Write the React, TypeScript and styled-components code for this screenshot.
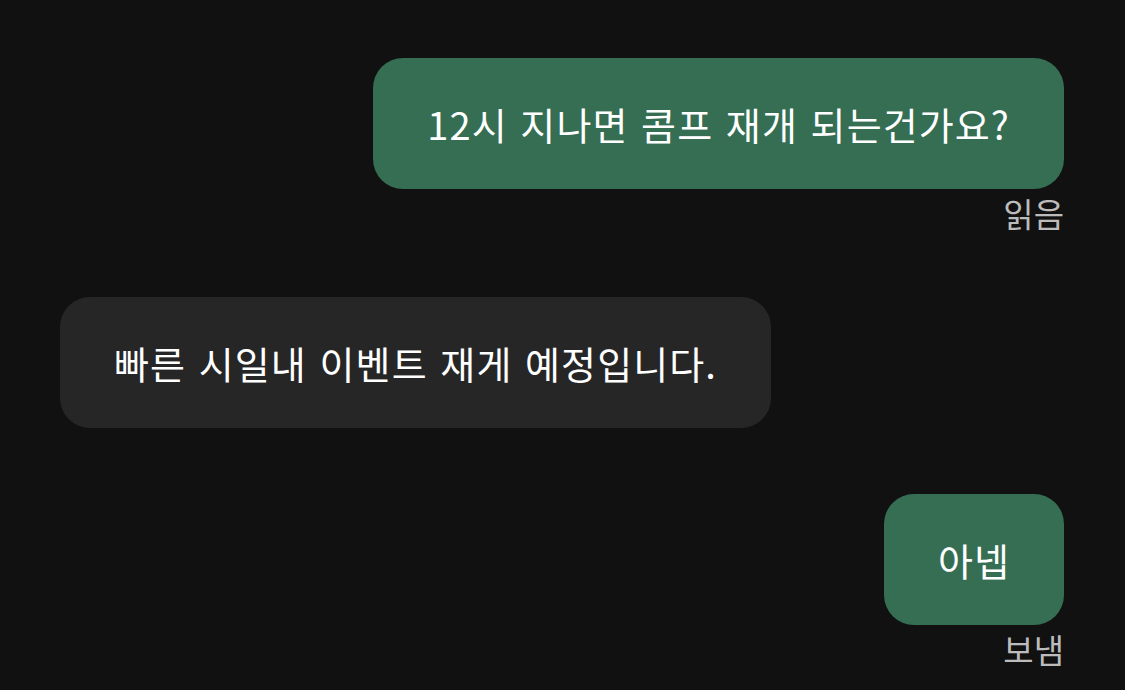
import styled, { createGlobalStyle } from 'styled-components'
import { ReactElement } from 'react'

const GlobalStyle = createGlobalStyle`
  html, body {
    margin: 0;
    padding: 0;
    background: #111111;
  }
  body {
    font-family: "Noto Sans CJK KR", "Noto Sans", sans-serif;
  }
`

const Chat = styled.div`
  width: 1125px;
  height: 690px;
  box-sizing: border-box;
  padding: 58px 61px 0 60px;
  display: flex;
  flex-direction: column;
  overflow: hidden;
`

const Row = styled.div<{ $mine: boolean; $gap: number }>`
  display: flex;
  flex-direction: column;
  align-items: ${(p) => (p.$mine ? 'flex-end' : 'flex-start')};
  margin-bottom: ${(p) => p.$gap}px;
`

const Bubble = styled.div<{ $mine: boolean }>`
  background: ${(p) => (p.$mine ? '#356e53' : '#262626')};
  color: #ffffff;
  border-radius: 30px;
  padding: 0 54px;
  height: 131px;
  display: flex;
  align-items: center;
  font-size: 38px;
  letter-spacing: 1.1px;
  word-spacing: 3px;
  white-space: nowrap;
`

const Status = styled.div`
  color: #bcbcbc;
  font-size: 33px;
  line-height: 40px;
  margin-top: 4px;
`

type TMessage = {
  text: string
  mine: boolean
  status?: string
  gap: number
}

const messages: TMessage[] = [
  { text: '12시 지나면 콤프 재개 되는건가요?', mine: true, status: '읽음', gap: 64 },
  { text: '빠른 시일내 이벤트 재게 예정입니다.', mine: false, gap: 66 },
  { text: '아넵', mine: true, status: '보냄', gap: 0 },
]

const App = (): ReactElement => {
  return (
    <>
      <GlobalStyle />
      <Chat>
        {messages.map((m, i) => (
          <Row key={i} $mine={m.mine} $gap={m.gap}>
            <Bubble $mine={m.mine}>{m.text}</Bubble>
            {m.status && <Status>{m.status}</Status>}
          </Row>
        ))}
      </Chat>
    </>
  )
}

export default App
